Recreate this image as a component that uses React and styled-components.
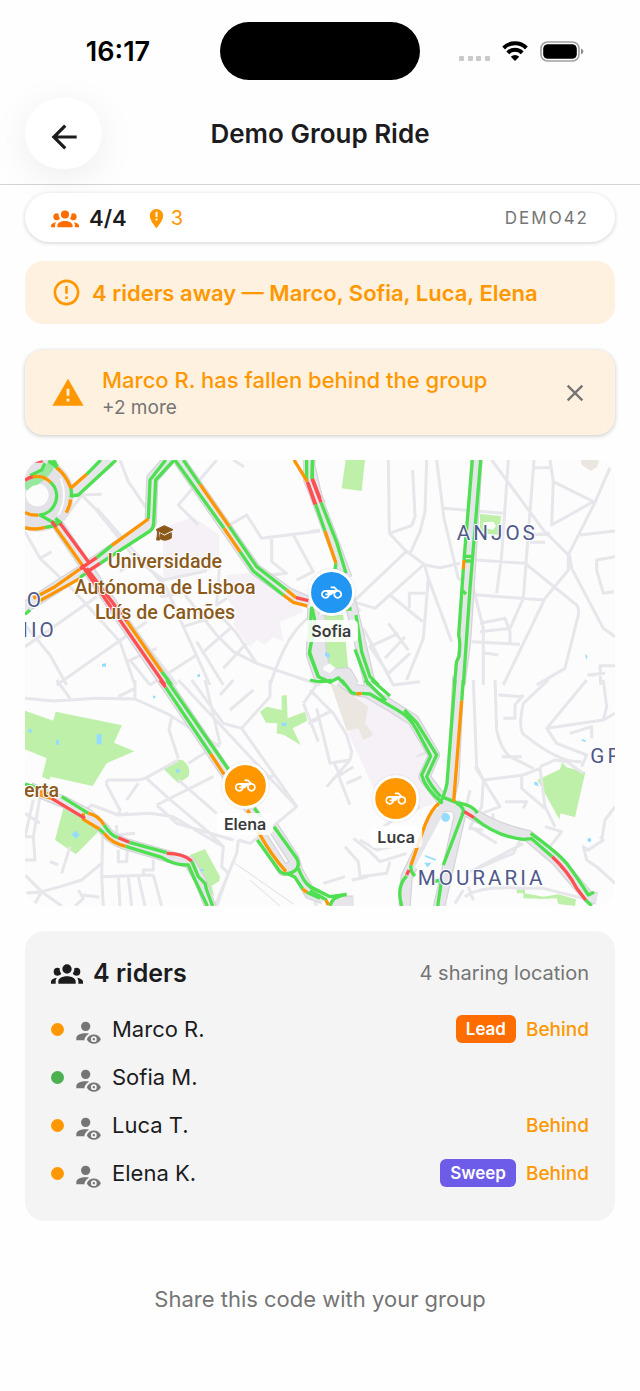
import React, { useState } from "react";
import styled, { createGlobalStyle } from "styled-components";

const GlobalStyle = createGlobalStyle`
  * {
    box-sizing: border-box;
  }
  body {
    margin: 0;
    background: #fefefe;
    color: #1c1c1e;
    font-family: Inter, "Liberation Sans", sans-serif;
  }
  button {
    border: none;
    background: none;
    padding: 0;
    font: inherit;
    cursor: pointer;
  }
`;

const icons = {
  back: "M20,11V13H8L13.5,18.5L12.08,19.92L4.16,12L12.08,4.08L13.5,5.5L8,11H20Z",
  close:
    "M19,6.41L17.59,5L12,10.59L6.41,5L5,6.41L10.59,12L5,17.59L6.41,19L12,13.41L17.59,19L19,17.59L13.41,12L19,6.41Z",
  group:
    "M12,5.5A3.5,3.5 0 0,1 15.5,9A3.5,3.5 0 0,1 12,12.5A3.5,3.5 0 0,1 8.5,9A3.5,3.5 0 0,1 12,5.5M5,8C5.56,8 6.08,8.15 6.53,8.42C6.38,9.85 6.8,11.27 7.66,12.38C7.16,13.34 6.16,14 5,14A3,3 0 0,1 2,11A3,3 0 0,1 5,8M19,8A3,3 0 0,1 22,11A3,3 0 0,1 19,14C17.84,14 16.84,13.34 16.34,12.38C17.2,11.27 17.62,9.85 17.47,8.42C17.92,8.15 18.44,8 19,8M5.5,18.25C5.5,16.18 8.41,14.5 12,14.5C15.59,14.5 18.5,16.18 18.5,18.25V20H5.5V18.25M0,20V18.5C0,17.11 1.89,15.94 4.45,15.6C3.86,16.28 3.5,17.22 3.5,18.25V20H0M24,20H20.5V18.25C20.5,17.22 20.14,16.28 19.55,15.6C22.11,15.94 24,17.11 24,18.5V20Z",
  pin: "M12,2C8.1,2 5,5.1 5,9C5,14.2 12,22 12,22C12,22 19,14.2 19,9C19,5.1 15.9,2 12,2M11,5H13V10.5H11V5M11,12H13V14H11V12Z",
  circleAlert:
    "M11,15H13V17H11V15M11,7H13V13H11V7M12,2C6.47,2 2,6.5 2,12A10,10 0 0,0 12,22A10,10 0 0,0 22,12A10,10 0 0,0 12,2M12,20A8,8 0 0,1 4,12A8,8 0 0,1 12,4A8,8 0 0,1 20,12A8,8 0 0,1 12,20Z",
  alert: "M13 14H11V9H13M13 18H11V16H13M1 21H23L12 2L1 21Z",
  motorbike:
    "M19.44 9.03L15.41 5H11v2h3.59l2 2H5c-2.8 0-5 2.2-5 5s2.2 5 5 5c2.46 0 4.45-1.69 4.9-4h1.65l2.77-2.77c-.21.54-.32 1.14-.32 1.77 0 2.8 2.2 5 5 5s5-2.2 5-5c0-2.65-1.97-4.77-4.56-4.97zM7.82 15C7.4 16.15 6.28 17 5 17c-1.63 0-3-1.37-3-3s1.37-3 3-3c1.28 0 2.4.85 2.82 2H5v2h2.82zM19 17c-1.66 0-3-1.34-3-3s1.34-3 3-3 3 1.34 3 3-1.34 3-3 3z",
  viewer:
    "M10,4A4,4 0 0,1 14,8A4,4 0 0,1 10,12A4,4 0 0,1 6,8A4,4 0 0,1 10,4M17,18A1,1 0 0,1 18,19A1,1 0 0,1 17,20A1,1 0 0,1 16,19A1,1 0 0,1 17,18M17,15C14.27,15 11.94,16.66 11,19C11.94,21.34 14.27,23 17,23C19.73,23 22.06,21.34 23,19C22.06,16.66 19.73,15 17,15M17,21.5A2.5,2.5 0 0,1 14.5,19A2.5,2.5 0 0,1 17,16.5A2.5,2.5 0 0,1 19.5,19A2.5,2.5 0 0,1 17,21.5M9.27,20H2V18C2,15.79 5.58,14 10,14C11.04,14 12.03,14.1 12.95,14.28C11.19,15.17 9.86,16.67 9.14,18.5L8.94,19L9.14,19.5C9.18,19.67 9.22,19.84 9.27,20Z",
};

const Icon = ({ name, size }) => (
  <svg width={size} height={size} viewBox="0 0 24 24" fill="currentColor" aria-hidden="true">
    <path d={icons[name]} fillRule="evenodd" />
  </svg>
);

const StatusBar = styled.div`
  display: grid;
  grid-template-columns: 1fr 200px 1fr;
  align-items: center;
  padding-top: 22px;
  color: black;
`;

const Time = styled.span`
  padding-left: 16px;
  text-align: center;
  font-size: 27px;
  font-weight: 600;
`;

const Island = styled.div`
  height: 58px;
  border-radius: 29px;
  background: black;
`;

const StatusIcons = styled.div`
  display: flex;
  align-items: center;
  justify-content: center;
  gap: 12px;
  padding-right: 18px;
`;

const Header = styled.header`
  display: grid;
  grid-template-columns: 77px 1fr 77px;
  align-items: center;
  padding: 18px 25px 15px;
  border-bottom: 1px solid #d5d5d7;
`;

const BackButton = styled.button`
  display: flex;
  align-items: center;
  justify-content: center;
  height: 71px;
  padding-top: 6px;
  border-radius: 36px;
  background: white;
  color: #1c1c1e;
  box-shadow: 0 8px 40px rgba(0, 0, 30, 0.07);
`;

const Title = styled.h1`
  margin: 0;
  text-align: center;
  font-size: 26px;
  line-height: 32px;
  font-weight: 600;
`;

const Content = styled.main`
  display: flex;
  flex-direction: column;
  gap: 25px;
  padding: 8px 25px 40px;
`;

const Summary = styled.div`
  display: flex;
  align-items: center;
  height: 49px;
  padding: 1px 26px 0;
  border-radius: 25px;
  background: white;
  box-shadow: 0 1px 4px rgba(0, 0, 0, 0.18);
`;

const Count = styled.span`
  display: flex;
  align-items: center;
  gap: 10px;
  color: #ff6d00;
  font-size: 22px;
  font-weight: 600;

  b {
    color: #1c1c1e;
    font-weight: 600;
  }
`;

const Issues = styled.span`
  display: flex;
  align-items: center;
  gap: 3px;
  margin-left: 18px;
  color: #ff9800;
  font-size: 20px;
`;

const Code = styled.span`
  margin-left: auto;
  color: #757575;
  font-size: 17px;
  letter-spacing: 2px;
`;

const Banners = styled.div`
  display: flex;
  flex-direction: column;
  gap: 26px;
  margin-top: -6px;
`;

const Banner = styled.div`
  display: flex;
  align-items: center;
  gap: ${(p) => (p.$raised ? 17 : 10)}px;
  min-height: ${(p) => (p.$raised ? 85 : 63)}px;
  padding: 0 26px;
  border-radius: 18px;
  background: #fff1df;
  color: #ff9800;
  font-size: 22px;
  line-height: 28px;
  font-weight: ${(p) => (p.$raised ? 500 : 600)};
  box-shadow: ${(p) => (p.$raised ? "0 1px 4px rgba(0, 0, 0, 0.22)" : "none")};
`;

const BannerText = styled.div`
  flex: 1;
  padding-top: 3px;
`;

const BannerNote = styled.div`
  color: #757575;
  font-size: 19px;
  font-weight: 400;
`;

const CloseButton = styled.button`
  display: flex;
  color: #757575;
`;

const MapCard = styled.section`
  position: relative;
  border-radius: 20px;
  background: #fcfcfd;
  overflow: hidden;

  > svg {
    display: block;
    width: 100%;
    height: auto;
  }
`;

const Marker = styled.div`
  position: absolute;
  display: flex;
  flex-direction: column;
  align-items: center;
  gap: 4px;
  transform: translate(-50%, -24px);
`;

const MarkerDot = styled.div`
  display: flex;
  align-items: center;
  justify-content: center;
  width: 47px;
  height: 47px;
  border: 3px solid white;
  border-radius: 50%;
  background: ${(p) => p.$color};
  color: white;
  box-shadow: 0 0 2px rgba(0, 0, 0, 0.15);
`;

const MarkerName = styled.span`
  padding: 0 7px;
  border-radius: 5px;
  background: rgba(255, 255, 255, 0.85);
  color: #3a3a3c;
  font-size: 16px;
  line-height: 22px;
  font-weight: 600;
`;

const RidersCard = styled.section`
  padding: 20px 26px 24px;
  border-radius: 20px;
  background: #f4f4f4;
`;

const RidersHeader = styled.div`
  display: flex;
  align-items: center;
  gap: 10px;
  height: 44px;
  margin-bottom: 10px;
`;

const RidersTitle = styled.h2`
  margin: 0;
  font-size: 25px;
  line-height: 30px;
  font-weight: 600;
`;

const Sharing = styled.span`
  margin-left: auto;
  color: #757575;
  font-size: 20px;
`;

const RiderList = styled.ul`
  margin: 0;
  padding: 0;
  list-style: none;
`;

const RiderRow = styled.li`
  display: flex;
  align-items: center;
  height: 48px;
  color: #757575;

  > svg {
    margin: 4px 10px 0 10px;
  }
`;

const Dot = styled.span`
  width: 13px;
  height: 13px;
  border-radius: 50%;
  background: ${(p) => p.$color};
`;

const RiderName = styled.span`
  flex: 1;
  color: #1c1c1e;
  font-size: 22px;
`;

const Badge = styled.span`
  padding: 0 10px;
  border-radius: 6px;
  background: ${(p) => p.$color};
  color: white;
  font-size: 17px;
  line-height: 28px;
  font-weight: 600;
`;

const Behind = styled.span`
  margin-left: 10px;
  color: #ff9800;
  font-size: 19px;
  font-weight: 500;
`;

const Share = styled.p`
  margin: 39px 0 0;
  color: #757575;
  text-align: center;
  font-size: 22px;
  line-height: 28px;
`;

const riders = [
  { name: "Marco R.", color: "#ff9800", role: "Lead", roleColor: "#ff6d00", behind: true },
  { name: "Sofia M.", color: "#4caf50" },
  { name: "Luca T.", color: "#ff9800", behind: true },
  { name: "Elena K.", color: "#ff9800", role: "Sweep", roleColor: "#6c5ce7", behind: true },
];

const markers = [
  { name: "Sofia", color: "#2196f3", left: "51.9%", top: "29.8%" },
  { name: "Elena", color: "#ff9800", left: "37.3%", top: "73.1%" },
  { name: "Luca", color: "#ff9800", left: "62.9%", top: "76%" },
];

// The map is drawn in four quarters, each with its own origin.
const quarters = [
  {
    origin: "translate(-15 -15)",
    lilac: "M428,220L520,185L540,200L598,240V330L560,350L430,370ZM620,360L740,350L830,430L850,470L780,500L790,560L760,545L735,570L710,555L690,575L640,510L650,470L620,430Z",
    water: "M54,126l8,-4v8l-8,4zM246,627l12,-2v10h-12zM532,659l8,-2v8h-8z",
    minor:
      "M300,15L325,80L410,205M590,15L475,150L535,210M640,15L672,35M130,195L185,120L245,118M185,120L225,160L345,310L430,375L560,348M85,150L250,400M620,215L680,180L725,250L900,228M755,252V320L800,355L755,360M820,240L880,350L830,375M598,340L590,450L620,430M15,230L60,310L95,290M60,310L155,400L300,560L345,690M15,510L90,600L140,690M15,575L230,425M110,690L380,500M250,400L470,690M230,160L440,400L490,515L570,690M430,375L425,425L500,410M490,515L600,480L650,535L710,625L900,690M495,420L590,540L640,590L710,625M545,595L630,520M610,640L680,565M530,560L610,690M530,600L390,690M900,470C820,500 780,600 750,690M330,615L390,690M320,620L410,580M345,310L300,350",
    major:
      "M110,205L440,690M10,460L120,390L200,338L392,205L397,70L450,10M477,15L705,343L805,415L870,443M160,112L270,15M868,10V75L900,150M880,460L876,600L900,670",
    ring: true,
    green:
      "M15,478L30,465M230,308L275,272M385,192L390,75L437,15M180,367L196,356M240,325L390,228Q400,220 401,205L407,75L462,15M490,15L540,88M628,215L710,335L800,405M465,15L612,220M660,290L700,348L790,420M200,58L242,15M152,123L175,120L288,15M860,15V75M877,15V70M425,650L455,690M877,462L885,500L868,595L895,665M85,18A106,106 0 0 1 118,45M152,98Q156,112 153,128M120,205A106,106 0 0 1 75,217M92,82A57,57 0 0 1 60,180L95,200L110,205M100,15L112,35M75,25L65,45L30,62M106,190L125,205",
    orange:
      "M40,430L105,395L180,342M275,272L385,192M55,440L180,370M540,88L628,215M612,220L660,290M800,405L828,428M790,420L820,442L862,453M152,100L200,58M822,15L862,80M105,215L190,335M320,498L425,650M110,38Q138,60 152,98M152,133Q150,155 138,173M75,217A106,106 0 0 1 15,218M37,66Q68,58 92,82M15,172Q32,182 55,180",
    red: "M180,342L230,308M196,354L240,325M828,428L865,437M862,80L885,148M877,70L900,130M95,200L108,216M120,205L205,320M185,330L435,690M200,340L320,498M15,76Q25,68 38,66M40,18H68",
  },
  {
    origin: "translate(855 -15)",
    park: "M107,15H165L155,108L95,100ZM510,177L573,183L568,240L510,235ZM40,480H100L117,665L80,640L20,610ZM0,480H30L40,600L5,600Z",
    beige: "M812,15H868L862,35L842,48L815,30Z",
    white: "M520,202L550,200L558,212L550,224L520,218ZM40,635L60,625L75,640L60,655L40,645Z",
    water: "M45,590L60,598L58,610L45,602ZM826,598L833,604L828,614Z",
    minor:
      "M235,15L238,235L285,285L345,330L390,338L450,325M308,45L315,185L305,212L238,235M350,15L345,170L330,230L300,295M380,15L402,190L445,370L490,400L520,520V690M402,160L578,175M595,15L575,300L560,415M672,15L655,235L640,430M545,15L700,225L780,305L785,340L880,520L915,545M720,15L730,80L725,210L850,140M730,80L855,142M675,38H718M900,38L855,142L775,300V345L705,430L580,690M810,240L915,228M495,315L645,325L800,450Q812,465 800,500L765,640L680,690M480,418L702,435M485,560L630,568M720,235L655,240M660,262H705M640,430L600,520L510,530M510,505L585,490L600,530V565M288,290L130,440L195,460L340,330M130,440L150,470M345,335L355,370L340,550L290,675M355,370L425,560M240,420L338,500M298,460V415H345M235,505L295,585M285,545L225,610M300,595L235,655L180,575L265,535M160,520L250,690L330,680M915,305L860,315V345L880,415L912,410M0,230L30,225M832,660L885,655M850,655V665M915,632H870L872,690M520,593L565,600",
    major: "M0,40L20,130L95,330L110,370M500,10L475,410L465,560L448,690M110,400L140,520L180,690M28,480L30,560Q35,640 60,660L110,655L130,690",
    green:
      "M8,15L6,72M33,142L80,262L108,355M17,148L45,228M78,325L75,342M487,15L462,315M460,342L446,540Q452,560 447,605Q437,620 438,640L433,690M512,15L480,400L460,690M462,304H488M462,318H488M455,405L468,417M138,480L155,590L180,665L205,690M135,583L175,690M5,455L-2,560M-2,590L25,665L60,682L85,668L105,690M85,462H125",
    orange: "M45,228L78,325M462,315L460,342",
    red: "M6,72L33,142M-6,85L17,148",
  },
  {
    origin: "translate(-15 660)",
    park: "M15,92L100,122L107,95L306,136L282,188L343,214L260,250L218,318L92,290L88,300L66,290L80,235L15,208ZM428,265Q470,230 490,242Q515,262 505,290L475,310ZM720,95L740,80L785,90V47L800,45L803,115L855,95L862,122L818,145L842,195L792,165L770,160L772,130L738,128ZM130,385L190,410L240,450L168,523L105,480ZM510,525L555,507L600,590L598,603L575,618L583,650L540,590Z",
    water: "M24,152a6,6 0 1 1 12,0a6,6 0 1 1 -12,0M107,180h10v15h-8zM230,163h15v30h-15zM155,464l12,-12l12,12l-12,12zM467,273a6,6 0 1 1 12,0a6,6 0 1 1 -12,0M785,128h15v10h-15zM399,47h7v8h-7zM540,568h12v5h-12z",
    minor:
      "M15,55L100,63L230,55L345,57L440,100L600,200M345,57V0M295,50L345,25M110,0L150,55M455,110L447,150L475,235M475,0L830,380L770,430L690,490L655,480M555,0L600,190L505,250M515,0L610,130L665,145L750,50V0M600,45L640,0M630,90L700,30M665,145L760,280L830,380M850,70L900,0M850,70L895,185M865,130L900,115M15,640L65,635L125,678M15,585L65,635L40,678M260,300H355L375,295L475,240M260,300V315L300,390L295,405L215,375L185,400M355,310L320,360M380,295L440,350L570,460L610,500L605,560L625,580M410,375L580,290M410,375L470,430L640,480M295,405L390,400L460,410L610,500M475,300L590,400M720,300L765,285M300,405L325,400M248,470L245,590L250,678M245,590L400,585M65,635L120,620L185,600L245,550M125,580L150,500M295,510V545H320L322,510M290,435V465L345,460M325,590L335,678M295,590L300,678M355,590L375,678M400,585L425,678M370,585V570H400V540M625,580L590,678M655,480L650,520L585,678M175,630L190,655L165,678M190,645L238,652M15,540H45L40,470L60,350M15,400L60,430M90,545L115,555M883,665L890,678M40,360L15,470M45,470H15",
    thin: "M645,550L820,672M690,600L780,678",
    major:
      "M430,0L720,430M30,325L130,365L205,405L250,445Q270,475 310,490L440,528L510,548L540,600L575,690M758,440L820,535L830,570L870,640L910,655M725,470L790,570L820,560",
    green:
      "M437,22L572,222M440,0L625,268M703,385L722,410M762,440L830,535Q842,558 825,572Q800,590 780,575L712,480M835,565Q850,605 870,620L900,635M800,580L825,592L848,627M860,637L900,655M15,312L60,325M125,350L205,400M252,435Q275,470 295,473M328,487L440,518M515,543L535,590L555,610L560,630L578,678M317,499L425,532Q460,555 505,555L525,600L562,678M238,447L252,460",
    orange:
      "M572,222L612,283M683,390L690,405M715,455Q750,520 798,575M848,627L860,637M205,400Q235,405 252,435M190,400V418L238,447M252,460Q275,490 317,499M60,345L95,355M60,335L90,342",
    red: "M420,0L437,22M295,473L328,487M440,520Q490,520 515,543M95,355L195,415",
  },
  {
    origin: "translate(855 660)",
    park: "M682,300L750,268L757,247L770,262L826,277L795,412L752,400L748,418ZM620,628L645,625V640L700,650L745,643L798,658L795,678L745,672L740,655L700,657L640,655V640H620Z",
    lilac: "M70,20L170,40L260,100L310,150L350,220L325,290L375,370L300,400L220,390L120,170Z",
    beige: "M60,5L125,45L175,80L165,130L190,165L160,180L145,145L110,152Z",
    white: "M390,420Q405,385 430,400L365,590L330,580L315,560Z",
    water: "M394,412a13,13 0 1 1 26,0a13,13 0 1 1 -26,0M345,525l32,12v5l-32,-12zM342,548h22l-11,14zM672,305l10,2l4,12l-12,-4zM815,177l12,4v5l-12,-4zM832,480a6,6 0 1 1 12,0a6,6 0 1 1 -12,0",
    minor:
      "M0,30L70,100L110,165L125,215L120,240L50,320M0,125L60,95M20,85L60,250L120,240M70,245L90,285L130,260M85,285L120,375M110,310L155,290M490,0L500,260L520,300L515,380L480,440M495,260L520,300L640,285L690,265L705,380M555,0L560,150Q575,220 610,235L670,265M565,45L640,50M640,45L615,75V115H580M715,0L640,70Q620,160 650,170Q750,250 815,245M880,0L890,80L880,120L710,145L830,0M710,145L740,190L830,225L815,260M780,160L845,140V175M690,260L735,240L770,245L820,280M635,285V325L705,385M520,300L570,380L515,400M585,365H650L640,385M575,230H635M915,100L880,120M480,330L470,375M445,360L455,380M550,400L545,435L635,470L610,520L480,575M480,440L560,490M475,445L520,450M640,490L490,570M465,650C500,625 560,620 630,625L700,625L820,655M705,440L755,455L720,500M705,380L735,440M870,470L880,480L835,510L820,500L830,540L860,560L915,610M915,380L885,420L875,480M130,475L180,515L210,545L290,520M105,500L145,545L150,590L230,580L240,545M150,480L200,510L290,490M40,610L105,590M125,600L175,590M435,670L460,630M475,620L490,660M320,230L365,210M220,440L280,400L330,380",
    major:
      "M445,-10L430,300L415,365M90,0L135,30L170,35L230,70L310,120L372,225L343,290L400,365M385,385L410,375L440,385L450,405L385,690M388,390L290,590L283,690M460,385Q560,450 655,468L740,540L835,650L860,655M65,665H130",
    green:
      "M0,0Q35,10 65,0M95,0L125,38L140,42M155,40L180,42L265,92Q300,112 320,150L362,228L335,285Q345,325 398,370M283,90L320,128L380,225L350,290Q360,315 392,350M165,0L228,62M185,0L240,48M435,0L411,310Q405,345 388,370M460,0L455,62M400,352L440,368Q490,375 502,400M440,370Q470,385 455,410L400,555M395,600L383,678M303,555Q300,575 315,588M290,588Q258,620 275,678M492,413Q560,470 640,478L665,476L727,530M827,660L845,678M662,460Q740,515 770,550Q800,590 835,645L852,637M0,620L60,650L110,643M0,632L50,660M60,678Q65,650 110,643M465,390L455,405M370,605L392,600",
    orange: "M140,42L155,40M455,62L431,365M387,370Q365,385 345,435L303,555M48,660L55,675",
    red: "M297,570L290,585M463,395L492,413M727,530Q775,575 800,625L827,660",
  },
];

const MapArea = styled.path`
  fill: ${(p) => p.$color};
`;

const Road = styled.path`
  fill: none;
  stroke: ${(p) => p.$color};
  stroke-width: ${(p) => p.$width};
  stroke-linejoin: round;
`;

const Place = styled.text`
  font-family: Roboto, sans-serif;
  font-size: ${(p) => (p.$district ? 62 : 59)}px;
  font-weight: ${(p) => (p.$district ? 400 : 500)};
  letter-spacing: ${(p) => (p.$district ? 9 : 0)}px;
  text-anchor: ${(p) => (p.$start ? "start" : "middle")};
  fill: ${(p) => (p.$district ? "#50598a" : "#8b5a1b")};
  stroke: white;
  stroke-width: 6px;
  stroke-linejoin: round;
  paint-order: stroke;
`;

const RideMap = () => (
  <MapCard aria-label="Group map">
    <svg viewBox="0 0 1770 1338">
      {quarters.map((q) => (
        <g key={q.origin} transform={q.origin}>
          <MapArea d={q.lilac} $color="#f5f1f6" />
          <MapArea d={q.beige} $color="#ebe6e0" />
          <MapArea d={q.park} $color="#bff0a9" />
          <Road d={q.minor} $color="#e6e6eb" $width={9} />
          <Road d={q.thin} $color="#dedee0" $width={3} />
        </g>
      ))}
      {quarters.map((q) => (
        <g key={q.origin} transform={q.origin}>
          <Road d={q.major} $color="#d3d3d8" $width={37} />
          {q.ring && <circle cx="52" cy="120" r="72" fill="none" stroke="#e2e2e7" strokeWidth="76" />}
        </g>
      ))}
      {quarters.map((q) => (
        <g key={q.origin} transform={q.origin}>
          <Road d={q.major} $color="#e6e6ea" $width={30} />
          <MapArea d={q.white} $color="#fcfcfd" />
          <MapArea d={q.water} $color="#93dbff" />
          {q.ring && (
            <g fill="none">
              <path d="M100,15Q80,70 15,95" stroke="#98e8a0" strokeWidth="24" />
              <circle cx="52" cy="122" r="32" fill="#fcfcfd" />
              <path d="M122,70Q145,130 115,180" stroke="#fcfcfd" strokeWidth="6" />
            </g>
          )}
        </g>
      ))}
      {quarters.map((q) => (
        <g key={q.origin} transform={q.origin}>
          <Road d={q.green} $color="#4fe052" $width={10} />
          <Road d={q.orange} $color="#ff9500" $width={10} />
          <Road d={q.red} $color="#ff4f50" $width={10} />
        </g>
      ))}
      <path
        d="M418,197L444,209L418,222L401,214V225L404,240H395L397,225V212L393,209ZM405,221L418,228L439,218V234Q420,246 405,236Z"
        fill="#8b5a1b"
        stroke="#8b5a1b"
        strokeWidth="3"
      />
      <Place x="420" y="325">Universidade</Place>
      <Place x="420" y="401">Autónoma de Lisboa</Place>
      <Place x="420" y="476">Luís de Camões</Place>
      <Place x="-3" y="1011" $start>erta</Place>
      <Place x="1417" y="240" $district>ANJOS</Place>
      <Place x="1370" y="1275" $district>MOURARIA</Place>
      <Place x="1696" y="908" $district $start>GR</Place>
      <Place x="5" y="442" $district $start>O</Place>
      <Place x="-8" y="530" $district $start>IIO</Place>
    </svg>
    {markers.map((m) => (
      <Marker key={m.name} style={{ left: m.left, top: m.top }}>
        <MarkerDot $color={m.color}>
          <Icon name="motorbike" size={21} />
        </MarkerDot>
        <MarkerName>{m.name}</MarkerName>
      </Marker>
    ))}
  </MapCard>
);

const PhoneStatus = () => (
  <StatusBar>
    <Time>16:17</Time>
    <Island />
    <StatusIcons>
      <svg width="31" height="20" viewBox="0 0 31 20" fill="#cacacc">
        <rect x="0" y="15" width="5" height="5" rx="1" />
        <rect x="9" y="15" width="5" height="5" rx="1" />
        <rect x="17" y="15" width="5" height="5" rx="1" />
        <rect x="26" y="15" width="5" height="5" rx="1" />
      </svg>
      <svg width="26" height="20" viewBox="0 0 26 20">
        <path d="M1.6 7a16 16 0 0 1 22.8 0M5.8 11.8a10 10 0 0 1 14.4 0" fill="none" stroke="black" strokeWidth="4" />
        <path d="M13 20l-4.2-4.3a6 6 0 0 1 8.4 0z" />
      </svg>
      <svg width="44" height="21" viewBox="0 0 44 21">
        <rect x="1" y="1" width="38" height="19" rx="6.5" fill="none" stroke="#a0a0a0" strokeWidth="1.6" />
        <rect x="3.2" y="3.2" width="33.6" height="14.6" rx="4.6" />
        <path d="M41 7.5q2.4 1 2.4 3t-2.4 3z" fill="#8e8e8e" />
      </svg>
    </StatusIcons>
  </StatusBar>
);

const App = () => {
  const [showAlert, setShowAlert] = useState(true);

  return (
    <>
      <GlobalStyle />
      <PhoneStatus />
      <Header>
        <BackButton aria-label="Back">
          <Icon name="back" size={38} />
        </BackButton>
        <Title>Demo Group Ride</Title>
      </Header>
      <Content>
        <Summary>
          <Count>
            <Icon name="group" size={28} />
            <b>4/4</b>
          </Count>
          <Issues>
            <Icon name="pin" size={23} />3
          </Issues>
          <Code>DEMO42</Code>
        </Summary>
        <Banners>
          <Banner>
            <Icon name="circleAlert" size={31} />
            4 riders away — Marco, Sofia, Luca, Elena
          </Banner>
          {showAlert && (
            <Banner $raised>
              <Icon name="alert" size={34} />
              <BannerText>
                Marco R. has fallen behind the group
                <BannerNote>+2 more</BannerNote>
              </BannerText>
              <CloseButton aria-label="Dismiss" onClick={() => setShowAlert(false)}>
                <Icon name="close" size={28} />
              </CloseButton>
            </Banner>
          )}
        </Banners>
        <RideMap />
        <RidersCard>
          <RidersHeader>
            <Icon name="group" size={32} />
            <RidersTitle>4 riders</RidersTitle>
            <Sharing>4 sharing location</Sharing>
          </RidersHeader>
          <RiderList>
            {riders.map((rider) => (
              <RiderRow key={rider.name}>
                <Dot $color={rider.color} />
                <Icon name="viewer" size={28} />
                <RiderName>{rider.name}</RiderName>
                {rider.role && <Badge $color={rider.roleColor}>{rider.role}</Badge>}
                {rider.behind && <Behind>Behind</Behind>}
              </RiderRow>
            ))}
          </RiderList>
        </RidersCard>
        <Share>Share this code with your group</Share>
      </Content>
    </>
  );
};

export default App;
